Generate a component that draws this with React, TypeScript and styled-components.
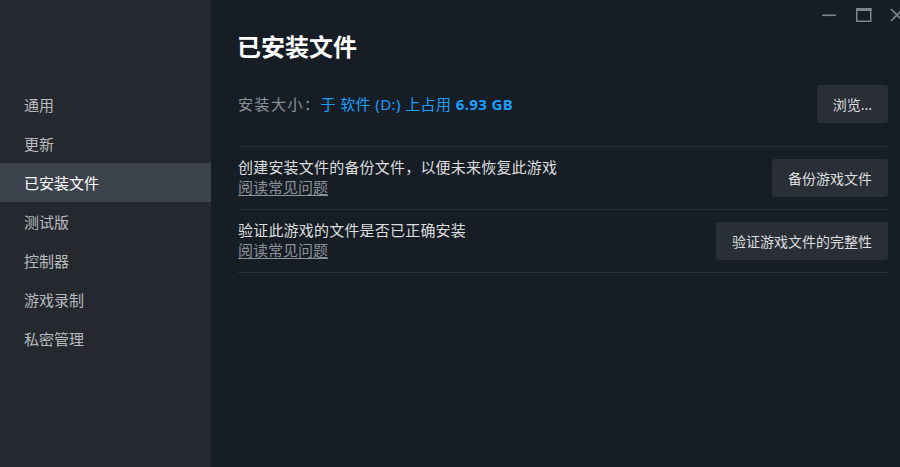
import React from "react";
import styled, { createGlobalStyle } from "styled-components";

const Global = createGlobalStyle`
  html, body { margin: 0; padding: 0; background: #171d25; }
  body { font-family: "Noto Sans", "Noto Sans CJK SC", sans-serif; }
  #root { width: 900px; height: 467px; overflow: hidden; }
`;

const Shell = styled.div`
  display: flex;
  width: 900px;
  height: 467px;
  overflow: hidden;
  background: #171d25;
  font-family: "Noto Sans", "Noto Sans CJK SC", sans-serif;
`;

const Sidebar = styled.nav`
  width: 211px;
  flex: none;
  background: #25282e;
  padding-top: 85px;
  display: flex;
  flex-direction: column;
`;

const NavItem = styled.div<{ $active?: boolean }>`
  height: 39px;
  display: flex;
  align-items: center;
  padding-left: 24px;
  font-size: 15px;
  color: ${(p) => (p.$active ? "#ffffff" : "#b8bcbf")};
  background: ${(p) => (p.$active ? "#3d434d" : "transparent")};
`;

const Main = styled.main`
  flex: 1;
  display: flex;
  flex-direction: column;
  min-width: 0;
`;

const TitleBar = styled.div`
  height: 30px;
  display: flex;
  justify-content: flex-end;
  align-items: flex-start;
`;

const WinBtn = styled.div<{ $w: number }>`
  width: ${(p) => p.$w}px;
  height: 30px;
  display: flex;
  align-items: flex-start;
  justify-content: flex-start;
  overflow: hidden;
`;

const Content = styled.div`
  padding: 0 12px 0 27px;
  display: flex;
  flex-direction: column;
`;

const Title = styled.h1`
  margin: 0;
  font-size: 24px;
  line-height: 34px;
  font-weight: 700;
  color: #ffffff;
  margin-left: -1px;
`;

const InfoRow = styled.div`
  margin-top: 21px;
  height: 37px;
  display: flex;
  align-items: center;
  justify-content: space-between;
  padding-bottom: 24px;
  border-bottom: 1px solid #2a2f37;
`;

const InfoLabel = styled.span`
  font-size: 15px;
  letter-spacing: 1.5px;
  color: #8b929a;
`;

const InfoValue = styled.span`
  font-size: 15px;
  letter-spacing: 0.4px;
  color: #1a9fff;
  b { font-weight: 700; }
`;

const Button = styled.button`
  height: 38px;
  padding: 0 16px;
  border: none;
  border-radius: 3px;
  background: #2a2e36;
  color: #dcdedf;
  font-family: "Noto Sans", "Noto Sans CJK SC", sans-serif;
  font-size: 14px;
  cursor: pointer;
  flex: none;
`;

const ActionRow = styled.div`
  height: 62px;
  display: flex;
  align-items: center;
  justify-content: space-between;
  border-bottom: 1px solid #2a2f37;
`;

const ActionText = styled.div`
  display: flex;
  flex-direction: column;
  margin-top: -2px;
`;

const ActionTitle = styled.span`
  font-size: 15px;
  line-height: 20px;
  letter-spacing: 0.2px;
  color: #dcdedf;
`;

const FaqLink = styled.a`
  font-size: 15px;
  line-height: 20px;
  color: #8b929a;
  text-decoration: underline;
  text-underline-offset: 2px;
  cursor: pointer;
`;

const items = ["通用", "更新", "已安装文件", "测试版", "控制器", "游戏录制", "私密管理"];

export default function App() {
  return (
    <Shell>
      <Global />
      <Sidebar>
        {items.map((t) => (
          <NavItem key={t} $active={t === "已安装文件"}>
            {t}
          </NavItem>
        ))}
      </Sidebar>
      <Main>
        <TitleBar>
          <WinBtn $w={34}>
            <svg width="34" height="30" viewBox="0 0 34 30">
              <rect x="9" y="14.5" width="14" height="1.6" fill="#7d848c" />
            </svg>
          </WinBtn>
          <WinBtn $w={37}>
            <svg width="37" height="30" viewBox="0 0 37 30">
              <rect x="9.75" y="8.75" width="14" height="12.5" fill="none" stroke="#7d848c" strokeWidth="1.5" />
              <rect x="9" y="8" width="15.5" height="3" fill="#7d848c" />
            </svg>
          </WinBtn>
          <WinBtn $w={16}>
            <svg width="16" height="30" viewBox="0 0 16 30">
              <path d="M7 9 L19 21 M19 9 L7 21" stroke="#7d848c" strokeWidth="1.6" fill="none" />
            </svg>
          </WinBtn>
        </TitleBar>
        <Content>
          <Title>已安装文件</Title>
          <InfoRow>
            <div>
              <InfoLabel>安装大小：</InfoLabel>
              <InfoValue>
                于 软件 (D:) 上占用 <b>6.93 GB</b>
              </InfoValue>
            </div>
            <Button>浏览...</Button>
          </InfoRow>
          <ActionRow>
            <ActionText>
              <ActionTitle>创建安装文件的备份文件，以便未来恢复此游戏</ActionTitle>
              <FaqLink>阅读常见问题</FaqLink>
            </ActionText>
            <Button>备份游戏文件</Button>
          </ActionRow>
          <ActionRow>
            <ActionText>
              <ActionTitle>验证此游戏的文件是否已正确安装</ActionTitle>
              <FaqLink>阅读常见问题</FaqLink>
            </ActionText>
            <Button>验证游戏文件的完整性</Button>
          </ActionRow>
        </Content>
      </Main>
    </Shell>
  );
}
